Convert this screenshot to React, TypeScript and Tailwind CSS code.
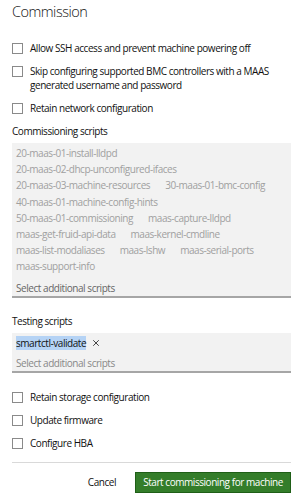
import { X } from 'lucide-react'

const font = { fontFamily: '"Open Sans", "Noto Sans", sans-serif' }

const commissioningScripts = [
  ['20-maas-01-install-lldpd'],
  ['20-maas-02-dhcp-unconfigured-ifaces'],
  ['20-maas-03-machine-resources', '30-maas-01-bmc-config'],
  ['40-maas-01-machine-config-hints'],
  ['50-maas-01-commissioning', 'maas-capture-lldpd'],
  ['maas-get-fruid-api-data', 'maas-kernel-cmdline'],
  ['maas-list-modaliases', 'maas-lshw', 'maas-serial-ports'],
  ['maas-support-info'],
]

function Checkbox({ children }: { children: React.ReactNode }) {
  return (
    <label className="flex items-start gap-[7px] text-[10px] leading-[14px] tracking-[-0.45px] text-[#111]">
      <span className="mt-[2px] h-[11px] w-[11px] shrink-0 border border-[#8a8a8a] bg-white" />
      <span>{children}</span>
    </label>
  )
}

export default function App() {
  return (
    <div className="h-[500px] w-[303px] overflow-hidden bg-white px-[12px] pt-[1px]" style={font}>
      <h1 className="text-[14.5px] font-light leading-[22px] tracking-[-0.5px] text-[#111]">Commission</h1>

      <div className="mt-[18px] flex flex-col gap-[9px]">
        <Checkbox>Allow SSH access and prevent machine powering off</Checkbox>
        <Checkbox>Skip configuring supported BMC controllers with a MAAS generated username and password</Checkbox>
        <Checkbox>Retain network configuration</Checkbox>
      </div>

      <p className="mt-[9px] text-[10px] leading-[14px] tracking-[-0.45px] text-[#111]">Commissioning scripts</p>
      <div className="mt-[5px] border-b-2 border-[#a6a6a6] bg-[#f2f2f2] px-[4px] pt-[2px] text-[10px] leading-[16.2px] tracking-[-0.45px]">
        {commissioningScripts.map((row, i) => (
          <div key={i} className="flex gap-[15px] text-[#a0a0a0]">
            {row.map((s) => (
              <span key={s}>{s}</span>
            ))}
          </div>
        ))}
        <div className="mt-[5px] text-[#666] leading-[16px]">Select additional scripts</div>
      </div>

      <p className="mt-[16px] text-[10px] leading-[14px] tracking-[-0.45px] text-[#111]">Testing scripts</p>
      <div className="mt-[5px] border-b-2 border-[#a6a6a6] bg-[#f2f2f2] px-[4px] pt-[3px] pb-[1px] text-[10px] leading-[14px] tracking-[-0.45px]">
        <div className="flex items-center gap-[5px]">
          <span className="bg-[#b5d3f5] text-[#111]">smartctl-validate</span>
          <X size={10} strokeWidth={2} className="text-[#222]" />
        </div>
        <div className="mt-[6px] text-[#888]">Select additional scripts</div>
      </div>

      <div className="mt-[17px] flex flex-col gap-[9px]">
        <Checkbox>Retain storage configuration</Checkbox>
        <Checkbox>Update firmware</Checkbox>
        <Checkbox>Configure HBA</Checkbox>
      </div>

      <div className="mt-[12px] border-t border-[#d9d9d9]" />

      <div className="mt-[9px] flex items-center justify-end gap-[19px] text-[10px] tracking-[-0.45px]">
        <button className="text-[#111]">Cancel</button>
        <button className="h-[21px] w-[156px] border border-[#1f5f17] bg-[#347d2a] leading-[19px] text-white">
          Start commissioning for machine
        </button>
      </div>
    </div>
  )
}
